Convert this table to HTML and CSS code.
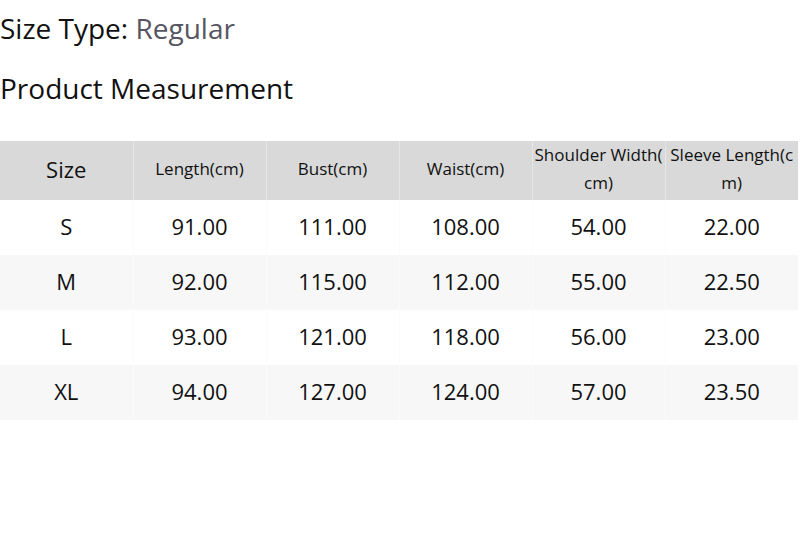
FILE: index.html
```html
<!DOCTYPE html>
<html>
<head>
<meta charset="utf-8">
<link rel="stylesheet" href="styles.css">
</head>
<body>
<div class="size-type"><span class="label">Size Type:</span> <span class="value">Regular</span></div>
<h2 class="title">Product Measurement</h2>
<table class="measure">
  <thead>
    <tr>
      <th class="size-head">Size</th>
      <th>Length(cm)</th>
      <th>Bust(cm)</th>
      <th>Waist(cm)</th>
      <th>Shoulder Width(cm)</th>
      <th>Sleeve Length(cm)</th>
    </tr>
  </thead>
  <tbody>
    <tr><td>S</td><td>91.00</td><td>111.00</td><td>108.00</td><td>54.00</td><td>22.00</td></tr>
    <tr class="alt"><td>M</td><td>92.00</td><td>115.00</td><td>112.00</td><td>55.00</td><td>22.50</td></tr>
    <tr><td>L</td><td>93.00</td><td>121.00</td><td>118.00</td><td>56.00</td><td>23.00</td></tr>
    <tr class="alt"><td>XL</td><td>94.00</td><td>127.00</td><td>124.00</td><td>57.00</td><td>23.50</td></tr>
  </tbody>
</table>
</body>
</html>
```
FILE: styles.css
```css
html, body {
  margin: 0;
  padding: 0;
  background: #fff;
}
body {
  font-family: "Open Sans", "Noto Sans", sans-serif;
  color: #111;
}
.size-type {
  margin-top: 10px;
  font-size: 28px;
  line-height: 36px;
}
.size-type .value {
  color: #565663;
}
.title {
  margin: 24px 0 0 0;
  font-size: 28px;
  font-weight: 400;
  line-height: 36px;
}
.measure {
  margin-top: 35px;
  width: 798px;
  border-collapse: collapse;
  table-layout: fixed;
}
.measure th {
  box-sizing: border-box;
  background: #d9d9d9;
  font-weight: 400;
  font-size: 17px;
  line-height: 28px;
  height: 59px;
  padding: 0 0 3px 0;
  text-align: center;
  vertical-align: middle;
  word-break: break-all;
  line-break: anywhere;
  border-right: 1px solid #e6e6e6;
}
.measure th.size-head {
  font-size: 22px;
}
.measure th:last-child,
.measure td:last-child {
  border-right: none;
}
.measure td {
  box-sizing: border-box;
  height: 55px;
  padding: 0 0 3px 0;
  font-size: 22px;
  text-align: center;
  vertical-align: middle;
  border-right: 1px solid #fbfbfb;
}
.measure tr.alt td {
  background: #f7f7f7;
}
```
